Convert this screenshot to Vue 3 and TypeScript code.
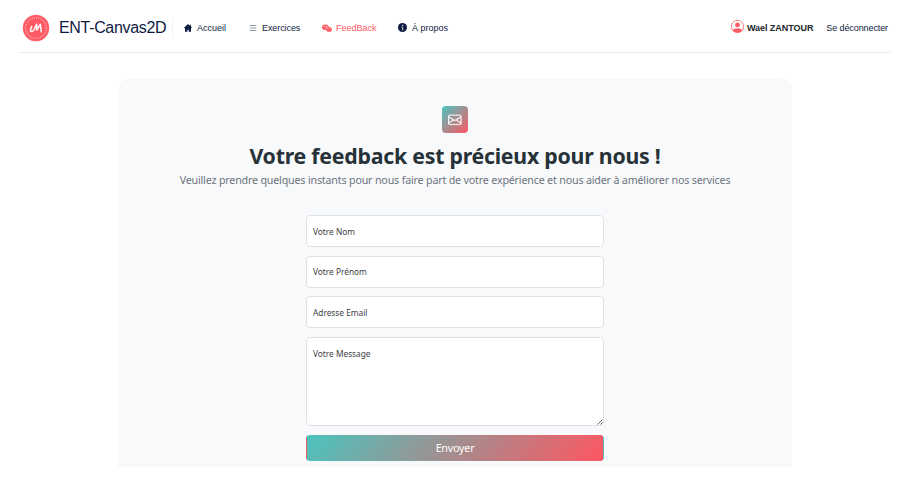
<script setup lang="ts">
import { ref } from 'vue'

interface Field {
  id: string
  label: string
}

const fields: Field[] = [
  { id: 'nom', label: 'Votre Nom' },
  { id: 'prenom', label: 'Votre Prénom' },
  { id: 'email', label: 'Adresse Email' },
]
const values = ref<Record<string, string>>({ nom: '', prenom: '', email: '' })
const message = ref('')
</script>

<template>
  <div class="page">
    <header class="topbar">
      <a class="brand">
        <svg class="logo" viewBox="0 0 28 28">
          <circle cx="14" cy="14" r="13.3" fill="#ff5a64" />
          <circle cx="14" cy="14" r="13.2" fill="none" stroke="#fff" stroke-width=".8" stroke-dasharray="1 1.6" opacity=".5" />
          <circle cx="14" cy="14" r="10.3" fill="none" stroke="#fff" stroke-width="1.6" stroke-dasharray=".9 1.3" opacity=".5" />
          <path d="M9.700 12.500L8.600 15.600Q8 17.600 9.800 17.500Q11.200 17.500 12 15.800L14.600 10.300L14.700 16L18.300 10.300L19.300 17.800" fill="none" stroke="#fff" stroke-width="1.5" stroke-linecap="round" stroke-linejoin="round" />
        </svg>
        <span class="brand-name">ENT-Canvas2D</span>
      </a>
      <nav class="nav">
        <a class="link home">
          <svg viewBox="0 0 16 16" fill="currentColor"><path d="M8 0L0 7.500l1.200 1.200L2 8v7.500h4.700v-4h2.600v4H14V8l.8.700L16 7.500l-2-1.900V1.500h-2.500v1.800z" /></svg>
          <span>Accueil</span>
        </a>
        <a class="link exercises">
          <svg viewBox="0 0 16 16" fill="none" stroke="#7b8295" stroke-width="1.7"><path d="M1.500 3h13M1.500 8h13M1.500 13h13" /></svg>
          <span>Exercices</span>
        </a>
        <a class="link feedback active">
          <svg viewBox="0 0 20 16" fill="currentColor">
            <path fill-rule="evenodd" d="M7 1C3 1 0 3.500 0 6.600c0 1.800 1 3.300 2.500 4.300L2 13l2.400-1.300c1 .3 2 .4 3 .3C6.500 8 9.500 5.400 13.700 5.300 13 2.700 10.300 1 7 1zM4.600 4a1 1 0 110 2 1 1 0 010-2zm4.800 0a1 1 0 110 2 1 1 0 010-2z" />
            <path fill-rule="evenodd" d="M14 6.200c-3.300 0-6 2.100-6 4.700s2.700 4.700 6 4.700c.7 0 1.300-.1 2-.3l2 .9-.5-1.700c1.500-.9 2.500-2.100 2.500-3.600 0-2.600-2.700-4.700-6-4.700zm-2 2.500a.8.8 0 110 1.600.8.8 0 010-1.600zm4 0a.8.8 0 110 1.600.8.8 0 010-1.600z" />
          </svg>
          <span>FeedBack</span>
        </a>
        <a class="link about">
          <svg viewBox="0 0 16 16"><circle cx="8" cy="8" r="8" fill="#101b44" /><circle cx="8.300" cy="4.200" r="1.300" fill="#fff" /><path d="M6.500 7.200h2L7.800 12h1.900" stroke="#fff" stroke-width="1.300" fill="none" /></svg>
          <span>À propos</span>
        </a>
      </nav>
      <div class="account">
        <svg viewBox="0 0 16 16" fill="#ff5a64">
          <path d="M11 6a3 3 0 1 1-6 0 3 3 0 0 1 6 0" />
          <path fill-rule="evenodd" d="M0 8a8 8 0 1 1 16 0A8 8 0 0 1 0 8m8-7a7 7 0 0 0-5.468 11.370C3.242 11.226 4.805 10 8 10s4.757 1.225 5.468 2.370A7 7 0 0 0 8 1" />
        </svg>
        <strong>Wael ZANTOUR</strong>
        <a class="logout">Se déconnecter</a>
      </div>
    </header>

    <main class="card">
      <div class="badge">
        <svg viewBox="0 0 16 16" fill="#fff" stroke="#fff" stroke-width=".3">
          <path d="M0 4a2 2 0 0 1 2-2h12a2 2 0 0 1 2 2v8a2 2 0 0 1-2 2H2a2 2 0 0 1-2-2zm2-1a1 1 0 0 0-1 1v.217l7 4.200 7-4.200V4a1 1 0 0 0-1-1zm13 2.383-4.708 2.825L15 11.105zm-.034 6.876-5.640-3.471L8 9.583l-1.326-.795-5.640 3.470A1 1 0 0 0 2 13h12a1 1 0 0 0 .966-.741M1 11.105l4.708-2.897L1 5.383z" />
        </svg>
      </div>
      <h1>Votre feedback est précieux pour nous !</h1>
      <p class="lead">Veuillez prendre quelques instants pour nous faire part de votre expérience et nous aider à améliorer nos services</p>
      <form class="form" @submit.prevent>
        <input v-for="f in fields" :key="f.id" v-model="values[f.id]" class="control" :placeholder="f.label" />
        <div class="message">
          <textarea v-model="message" class="control area" placeholder="Votre Message"></textarea>
          <svg class="grip" viewBox="0 0 6 6" stroke="#555" stroke-width=".9"><path d="M.5 5.500l5-5M3.500 5.500l2-2" /></svg>
        </div>
        <button type="submit" class="send">Envoyer</button>
      </form>
    </main>
  </div>
</template>

<style>
body {
  background: #fff;
  overflow: hidden;
}
</style>

<style scoped>
* {
  box-sizing: border-box;
}
.page {
  width: 907px;
  height: 486px;
  font-family: 'Noto Sans', sans-serif;
  color: #212529;
}
.topbar {
  display: flex;
  align-items: center;
  height: 53px;
  margin: 0 16px 0 19px;
  padding: 3px 3px 0;
  border-bottom: 1px solid #ebebeb;
  font-family: 'Liberation Sans', Arial, sans-serif;
  color: #101b44;
  white-space: nowrap;
}
.brand {
  display: flex;
  align-items: center;
  width: 151px;
  height: 20px;
  border-right: 1px solid #f1f1f3;
}
.logo {
  flex: none;
  width: 28px;
  height: 28px;
  margin-right: 9px;
}
.brand-name {
  font-size: 16px;
  letter-spacing: -0.33px;
}
.nav {
  display: flex;
  align-items: center;
  font-size: 9px;
}
.link {
  display: flex;
  align-items: center;
}
.link span {
  padding-top: 1px;
}
.link svg {
  flex: none;
  height: 8px;
}
.home {
  width: 65px;
  margin-left: 11px;
}
.home svg {
  width: 8px;
  margin-right: 5px;
}
.exercises {
  width: 73px;
  letter-spacing: -0.08px;
}
.exercises svg {
  width: 8px;
  margin-right: 5px;
}
.feedback {
  width: 76px;
}
.feedback svg {
  width: 10px;
  margin-right: 4px;
}
.about svg {
  width: 9px;
  height: 9px;
  margin-right: 5px;
}
.active {
  color: #ff5a64;
}
.account {
  display: flex;
  align-items: center;
  margin-left: auto;
  font-size: 9px;
}
.account svg {
  width: 13px;
  height: 13px;
  margin: -3px 3px 0 0;
}
.account strong {
  padding-top: 1px;
  color: #212529;
  letter-spacing: -0.05px;
}
.logout {
  margin-left: 13px;
  letter-spacing: -0.1px;
}
.card {
  width: 674px;
  height: 388px;
  margin: 26px 0 0 118px;
  padding-top: 27px;
  border-radius: 10px 10px 0 0;
  background: #f8f9fb;
  display: flex;
  flex-direction: column;
  align-items: center;
  overflow: hidden;
}
.badge {
  flex: none;
  display: grid;
  place-items: center;
  width: 26.600px;
  height: 26.600px;
  border-radius: 4px;
  background: linear-gradient(135deg, #4ac4bd, #ff5661);
}
.badge svg {
  width: 13.500px;
  height: 13.500px;
}
h1 {
  margin: 7.400px 0 0;
  font-size: 21.3px;
  line-height: 32px;
  font-weight: 700;
  color: #263238;
  letter-spacing: -0.24px;
  white-space: nowrap;
}
.lead {
  margin: 0;
  font-size: 10.7px;
  line-height: 16px;
  color: #6c757d;
  letter-spacing: -0.178px;
  white-space: nowrap;
}
.form {
  display: flex;
  flex-direction: column;
  width: 298px;
  margin-top: 27.200px;
  gap: 8.6px;
}
.control {
  display: block;
  width: 100%;
  height: 32px;
  margin: 0;
  padding: 0 6px;
  border: 1px solid #dee2e6;
  border-radius: 4px;
  background: #fff;
  font-family: inherit;
  font-size: 8.3px;
  outline: none;
}
.control::placeholder {
  color: #3c4045;
  opacity: 1;
}
.message {
  position: relative;
}
.area {
  height: 89px;
  padding-top: 10px;
  line-height: 12px;
  resize: none;
}
.grip {
  position: absolute;
  right: 1px;
  bottom: 1px;
  width: 6px;
  height: 6px;
}
.send {
  height: 26.600px;
  padding: 0;
  border: 1px solid transparent;
  border-radius: 4px;
  background: linear-gradient(135deg, #4ac4bd, #ff5661);
  color: #fff;
  font-family: inherit;
  font-size: 10.7px;
  letter-spacing: -0.2px;
}
</style>
